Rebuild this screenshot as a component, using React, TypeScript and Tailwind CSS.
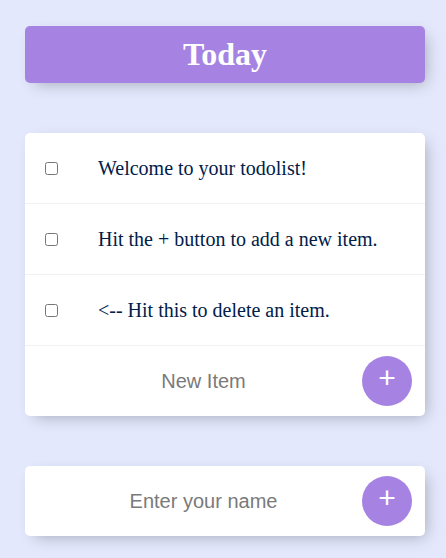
import React from "react";

const items = [
  "Welcome to your todolist!",
  "Hit the + button to add a new item.",
  "<-- Hit this to delete an item.",
];

const boxClass =
  "w-[400px] ml-[25px] rounded-[5px] shadow-[5px_5px_15px_-5px_rgba(0,0,0,0.3)]";

const AddButton = () => (
  <button className="h-[50px] w-[50px] shrink-0 rounded-full bg-[#A683E3] text-white text-[30px] leading-none pb-[6px] font-['Liberation_Sans',Arial,sans-serif] flex items-center justify-center">
    +
  </button>
);

const NameInput = ({ placeholder }: { placeholder: string }) => (
  <form className="ml-[20px] flex items-center gap-[4px]">
    <input
      type="text"
      placeholder={placeholder}
      className="w-[313px] h-[60px] pl-[4px] text-center text-[20px] outline-none placeholder:text-[#7a7a7a] font-['Liberation_Sans',Arial,sans-serif]"
    />
    <AddButton />
  </form>
);

const App = () => {
  return (
    <div className="min-h-[558px] bg-[#E3E8FC] pt-[26px] pb-[22px]">
      {/* heading */}
      <div className={`${boxClass} bg-[#A683E3]`}>
        <h1 className="text-white text-center text-[32px] font-bold leading-[37px] py-[10px] font-['Liberation_Serif','Times_New_Roman',serif]">
          Today
        </h1>
      </div>

      {/* list */}
      <div className={`${boxClass} bg-white mt-[50px]`}>
        {items.map((text, i) => (
          <div
            key={i}
            className="min-h-[71px] flex items-center border-b border-[#F1F1F1]"
          >
            <input type="checkbox" className="m-[20px] w-[13px] h-[13px]" />
            <p className="p-[20px] text-[20px] text-[#00204a] font-['Liberation_Serif','Times_New_Roman',serif]">
              {text}
            </p>
          </div>
        ))}
        <div className="h-[70px] flex items-center">
          <NameInput placeholder="New Item" />
        </div>
      </div>

      {/* name */}
      <div className={`${boxClass} bg-white mt-[50px] h-[70px] flex items-center`}>
        <NameInput placeholder="Enter your name" />
      </div>
    </div>
  );
};

export default App;
